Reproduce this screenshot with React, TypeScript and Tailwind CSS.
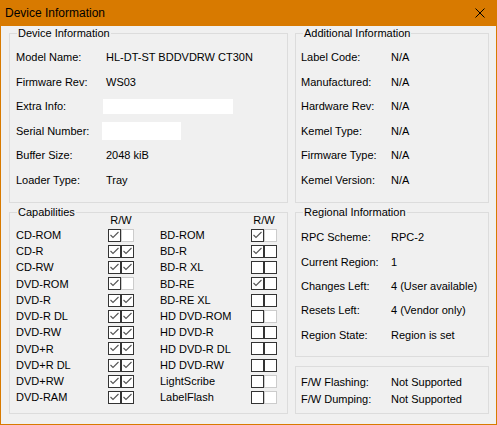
import type { ReactNode } from 'react'

type Mark = 'on' | 'off' | 'na'

const deviceRows: { label: string; value?: string; blank?: 'extra' | 'serial' }[] = [
  { label: 'Model Name:', value: 'HL-DT-ST BDDVDRW CT30N' },
  { label: 'Firmware Rev:', value: 'WS03' },
  { label: 'Extra Info:', blank: 'extra' },
  { label: 'Serial Number:', blank: 'serial' },
  { label: 'Buffer Size:', value: '2048 kiB' },
  { label: 'Loader Type:', value: 'Tray' },
]

const additionalRows = [
  ['Label Code:', 'N/A'],
  ['Manufactured:', 'N/A'],
  ['Hardware Rev:', 'N/A'],
  ['Kemel Type:', 'N/A'],
  ['Firmware Type:', 'N/A'],
  ['Kemel Version:', 'N/A'],
]

const regionalRows = [
  ['RPC Scheme:', 'RPC-2'],
  ['Current Region:', '1'],
  ['Changes Left:', '4 (User available)'],
  ['Resets Left:', '4 (Vendor only)'],
  ['Region State:', 'Region is set'],
]

const firmwareRows = [
  ['F/W Flashing:', 'Not Supported'],
  ['F/W Dumping:', 'Not Supported'],
]

// [left name, read, write, right name, read, write]
const capabilities: [string, Mark, Mark, string, Mark, Mark][] = [
  ['CD-ROM', 'on', 'na', 'BD-ROM', 'on', 'na'],
  ['CD-R', 'on', 'on', 'BD-R', 'on', 'off'],
  ['CD-RW', 'on', 'on', 'BD-R XL', 'off', 'off'],
  ['DVD-ROM', 'on', 'na', 'BD-RE', 'on', 'off'],
  ['DVD-R', 'on', 'on', 'BD-RE XL', 'off', 'off'],
  ['DVD-R DL', 'on', 'on', 'HD DVD-ROM', 'off', 'na'],
  ['DVD-RW', 'on', 'on', 'HD DVD-R', 'off', 'off'],
  ['DVD+R', 'on', 'on', 'HD DVD-R DL', 'off', 'off'],
  ['DVD+R DL', 'on', 'on', 'HD DVD-RW', 'off', 'off'],
  ['DVD+RW', 'on', 'on', 'LightScribe', 'off', 'na'],
  ['DVD-RAM', 'on', 'on', 'LabelFlash', 'off', 'na'],
]

function Group({ title, className, children }: { title?: string; className: string; children: ReactNode }) {
  return (
    <div className={`border border-[#dcdcdc] ${className}`}>
      {title && <div className="-mt-[7px] ml-[7px] w-fit bg-[#f0f0f0] px-px leading-[13px]">{title}</div>}
      {children}
    </div>
  )
}

function Box({ mark }: { mark: Mark }) {
  return (
    <span
      className={`flex h-[13px] w-[13px] items-center justify-center border bg-white ${
        mark === 'na' ? 'border-[#cccccc]' : 'border-[#333333]'
      }`}
    >
      {mark === 'on' && (
        <svg width="11" height="11" viewBox="0 0 11 11">
          <polyline points="1.5,5 4,7.5 9.5,2" fill="none" stroke="#555555" strokeWidth="1.1" />
        </svg>
      )}
    </span>
  )
}

function Pair({ r, w }: { r: Mark; w: Mark }) {
  return (
    <div className="flex w-[26px]">
      <Box mark={r} />
      <Box mark={w} />
    </div>
  )
}

export default function App() {
  return (
    <div className="flex h-[425px] w-[497px] flex-col bg-[#d87a00] px-px pb-px font-['Liberation_Sans',Arial,sans-serif] text-[11px] text-black">
      <div className="flex h-[26px] shrink-0 items-center justify-between pl-[4px] pr-[11px]">
        <span className="text-[12px]">Device Information</span>
        <svg width="10" height="10" viewBox="0 0 10 10">
          <path d="M0.5 0.5 L9.5 9.5 M9.5 0.5 L0.5 9.5" stroke="#000" strokeWidth="1" />
        </svg>
      </div>

      <div className="flex flex-1 gap-[7px] bg-[#f0f0f0] pl-[8px] pt-[7px]">
        <div className="flex w-[279px] flex-col gap-[9px]">
          <Group title="Device Information" className="h-[170px]">
            <div className="flex flex-col px-[6px] pt-[5px]">
              {deviceRows.map((row) => (
                <div key={row.label} className="flex h-[24.6px] items-center">
                  <span className="w-[90px] shrink-0">{row.label}</span>
                  {row.value && <span>{row.value}</span>}
                  {row.blank === 'extra' && <span className="-ml-[3px] h-[15px] w-[130px] bg-white" />}
                  {row.blank === 'serial' && <span className="-ml-[4px] h-[18px] w-[79px] bg-white" />}
                </div>
              ))}
            </div>
          </Group>

          <Group title="Capabilities" className="h-[202px]">
            <div className="flex flex-col pl-[6px]">
              <div className="-mt-[5px] flex h-[13px] items-center">
                <span className="w-[92px]" />
                <span className="w-[26px] text-center">R/W</span>
                <span className="w-[26px]" />
                <span className="w-[91px]" />
                <span className="w-[26px] text-center">R/W</span>
              </div>
              {capabilities.map(([a, ar, aw, b, br, bw]) => (
                <div key={a} className="flex h-[16.25px] items-center">
                  <span className="w-[92px]">{a}</span>
                  <Pair r={ar} w={aw} />
                  <span className="w-[26px]" />
                  <span className="w-[91px]">{b}</span>
                  <Pair r={br} w={bw} />
                </div>
              ))}
            </div>
          </Group>
        </div>

        <div className="flex w-[194px] flex-col gap-[9px]">
          <Group title="Additional Information" className="h-[170px]">
            <div className="flex flex-col pl-[5px] pt-[5px]">
              {additionalRows.map(([k, v]) => (
                <div key={k} className="flex h-[24.6px] items-center">
                  <span className="w-[90px]">{k}</span>
                  <span>{v}</span>
                </div>
              ))}
            </div>
          </Group>

          <Group title="Regional Information" className="h-[145px]">
            <div className="flex flex-col pl-[5px] pt-[6.5px]">
              {regionalRows.map(([k, v]) => (
                <div key={k} className="flex h-[24.3px] items-center">
                  <span className="w-[90px]">{k}</span>
                  <span>{v}</span>
                </div>
              ))}
            </div>
          </Group>

          <Group className="h-[48px]">
            <div className="flex flex-col pl-[5px] pt-[7.5px]">
              {firmwareRows.map(([k, v]) => (
                <div key={k} className="flex h-[16.3px] items-center">
                  <span className="w-[90px]">{k}</span>
                  <span>{v}</span>
                </div>
              ))}
            </div>
          </Group>
        </div>
      </div>
    </div>
  )
}
